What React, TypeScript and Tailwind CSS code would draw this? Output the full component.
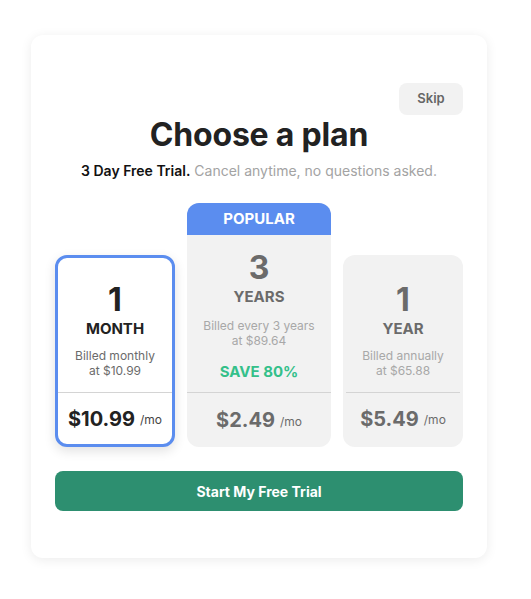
import React from "react";

export default function App() {
  return (
    <div className="min-h-[599px] w-[531px] bg-white pt-[35px] pl-[31px]" style={{ fontFamily: "Inter, 'Noto Sans', sans-serif" }}>
      <div className="w-[456px] rounded-xl bg-white shadow-[0_2px_12px_rgba(0,0,0,0.08)] px-6 pt-12 pb-[47px]">
        <div className="flex justify-end">
          <button className="h-8 w-16 rounded-lg bg-[#f2f2f2] text-[13px] font-semibold text-[#666]">Skip</button>
        </div>
        <h1 className="text-center text-[32px] font-bold leading-10 text-[#222] tracking-[-0.2px]">Choose a plan</h1>
        <p className="mt-[6px] text-center text-[14px] leading-5 text-[#a3a3a3]">
          <span className="font-semibold text-[#111]">3 Day Free Trial.</span> Cancel anytime, no questions asked.
        </p>
        <div className="mt-[22px] flex items-end gap-3">
          {/* Card 1 selected */}
          <div className="w-[120px] rounded-xl border-[3px] border-[#5b8def] bg-white shadow-[0_4px_12px_rgba(0,0,0,0.12)] flex flex-col">
            <div className="h-[134px] flex flex-col items-center pt-[24px]">
              <div className="text-[32px] font-bold leading-9 text-[#222]">1</div>
              <div className="mt-[1px] text-[15px] font-bold leading-5 text-[#222]">MONTH</div>
              <div className="mt-[9px] text-center text-[12px] leading-[15px] text-[#6b6b6b]">Billed monthly<br />at $10.99</div>
            </div>
            <div className="h-[52px] border-t border-[#d4d4d4] flex items-center justify-center gap-[5px]">
              <span className="text-[20px] font-bold text-[#222]">$10.99</span>
              <span className="text-[12px] text-[#444] mt-[3px]">/mo</span>
            </div>
          </div>
          {/* Card 2 popular */}
          <div className="w-[144px] rounded-xl bg-[#f2f2f2] overflow-hidden flex flex-col">
            <div className="h-8 bg-[#5b8def] flex items-center justify-center text-[15px] font-bold text-white">POPULAR</div>
            <div className="h-[157px] flex flex-col items-center pt-[15px]">
              <div className="text-[32px] font-bold leading-9 text-[#6b6b6b]">3</div>
              <div className="mt-[1px] text-[15px] font-bold leading-5 text-[#6b6b6b]">YEARS</div>
              <div className="mt-[11px] text-center text-[12px] leading-[15px] text-[#a8a8a8]">Billed every 3 years<br />at $89.64</div>
              <div className="mt-[14px] text-[15px] font-bold leading-5 text-[#34c08a]">SAVE 80%</div>
            </div>
            <div className="h-[55px] border-t border-[#d4d4d4] flex items-center justify-center gap-[5px]">
              <span className="text-[20px] font-bold text-[#6b6b6b]">$2.49</span>
              <span className="text-[12px] text-[#6b6b6b] mt-[3px]">/mo</span>
            </div>
          </div>
          {/* Card 3 */}
          <div className="w-[120px] rounded-xl border-[3px] border-transparent bg-[#f2f2f2] flex flex-col">
            <div className="h-[134px] flex flex-col items-center pt-[24px]">
              <div className="text-[32px] font-bold leading-9 text-[#6b6b6b]">1</div>
              <div className="mt-[1px] text-[15px] font-bold leading-5 text-[#6b6b6b]">YEAR</div>
              <div className="mt-[9px] text-center text-[12px] leading-[15px] text-[#a8a8a8]">Billed annually<br />at $65.88</div>
            </div>
            <div className="h-[52px] border-t border-[#d4d4d4] flex items-center justify-center gap-[5px]">
              <span className="text-[20px] font-bold text-[#6b6b6b]">$5.49</span>
              <span className="text-[12px] text-[#6b6b6b] mt-[3px]">/mo</span>
            </div>
          </div>
        </div>
        <button className="mt-6 h-10 w-full rounded-lg bg-[#2d8f70] text-[14px] font-bold text-white">Start My Free Trial</button>
      </div>
    </div>
  );
}
